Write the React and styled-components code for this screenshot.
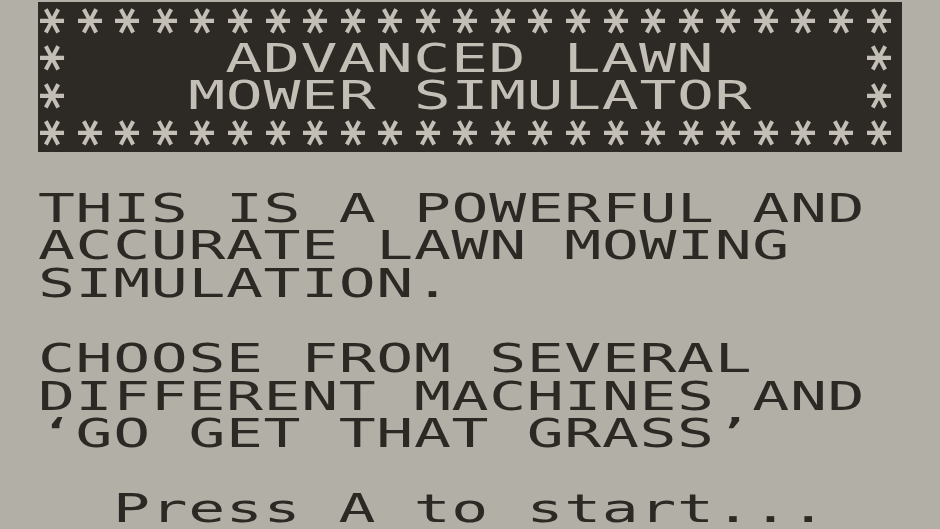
import styled, { createGlobalStyle } from "styled-components";

// one character cell of the text screen
const CELL = 37.6;
const FONT_SIZE = 38.4;
const STRETCH = 1.6;
const SPACING = CELL / STRETCH - 0.602 * FONT_SIZE;
const BANNER_COLS = 23;
const BANNER_CELL = 864 / BANNER_COLS;

const GlobalStyle = createGlobalStyle`
  html, body {
    margin: 0;
    padding: 0;
    background: #b2afa7;
    overflow: hidden;
  }
`;

const Screen = styled.div`
  width: 940px;
  height: 529px;
  box-sizing: border-box;
  padding: 2px 0 0 38px;
  display: flex;
  flex-direction: column;
  background: #b2afa7;
  color: #2c2925;
  font-family: "DejaVu Sans Mono", monospace;
  font-size: ${FONT_SIZE}px;
  overflow: hidden;
`;

const Banner = styled.div`
  width: 864px;
  height: 150px;
  flex-shrink: 0;
  background: #2d2a25;
  color: #c3bfb7;
  display: grid;
  grid-template-rows: repeat(4, 37.5px);
`;

const StarRow = styled.div`
  display: flex;
  height: 37.5px;
  min-height: 0;
`;

const TitleRow = styled(StarRow)`
  align-items: center;
`;

const StarCell = styled.div`
  width: ${BANNER_CELL}px;
  height: 37.5px;
  flex-shrink: 0;
  display: flex;
  align-items: center;
  justify-content: center;
`;

const StarGlyph = styled.span`
  display: inline-block;
  font-size: 52px;
  font-weight: bold;
  line-height: 1;
  transform: rotate(90deg) translateY(0.234em);
`;

const Title = styled.div`
  flex: 1;
  height: 37.5px;
  text-align: center;
  line-height: 37.5px;
  white-space: pre;
`;

const Text = styled.span`
  display: inline-block;
  letter-spacing: ${SPACING}px;
  transform: scaleX(${STRETCH});
  transform-origin: ${(p) => (p.$center ? "center" : "left")};
`;

const Paragraph = styled.div`
  margin-top: ${CELL}px;
  padding-left: ${(p) => (p.$indent || 0) * CELL}px;
`;

const Line = styled.div`
  height: ${CELL}px;
  line-height: ${CELL}px;
  white-space: pre;
`;

const Star = () => (
  <StarCell>
    <StarGlyph>*</StarGlyph>
  </StarCell>
);

const Stars = () => (
  <StarRow>
    {Array.from({ length: BANNER_COLS }, (_, i) => (
      <Star key={i} />
    ))}
  </StarRow>
);

const intro = ["THIS IS A POWERFUL AND", "ACCURATE LAWN MOWING", "SIMULATION."];
const pitch = ["CHOOSE FROM SEVERAL", "DIFFERENT MACHINES AND", "\u2018GO GET THAT GRASS\u2019"];

const App = () => {
  return (
    <>
      <GlobalStyle />
      <Screen>
        <Banner>
          <Stars />
          <TitleRow>
            <Star />
            <Title>
              <Text $center>ADVANCED LAWN</Text>
            </Title>
            <Star />
          </TitleRow>
          <TitleRow>
            <Star />
            <Title>
              <Text $center>MOWER SIMULATOR</Text>
            </Title>
            <Star />
          </TitleRow>
          <Stars />
        </Banner>
        <Paragraph>
          {intro.map((l) => (
            <Line key={l}>
              <Text>{l}</Text>
            </Line>
          ))}
        </Paragraph>
        <Paragraph>
          {pitch.map((l) => (
            <Line key={l}>
              <Text>{l}</Text>
            </Line>
          ))}
        </Paragraph>
        <Paragraph $indent={2}>
          <Line>
            <Text>Press A to start...</Text>
          </Line>
        </Paragraph>
      </Screen>
    </>
  );
};

export default App;
